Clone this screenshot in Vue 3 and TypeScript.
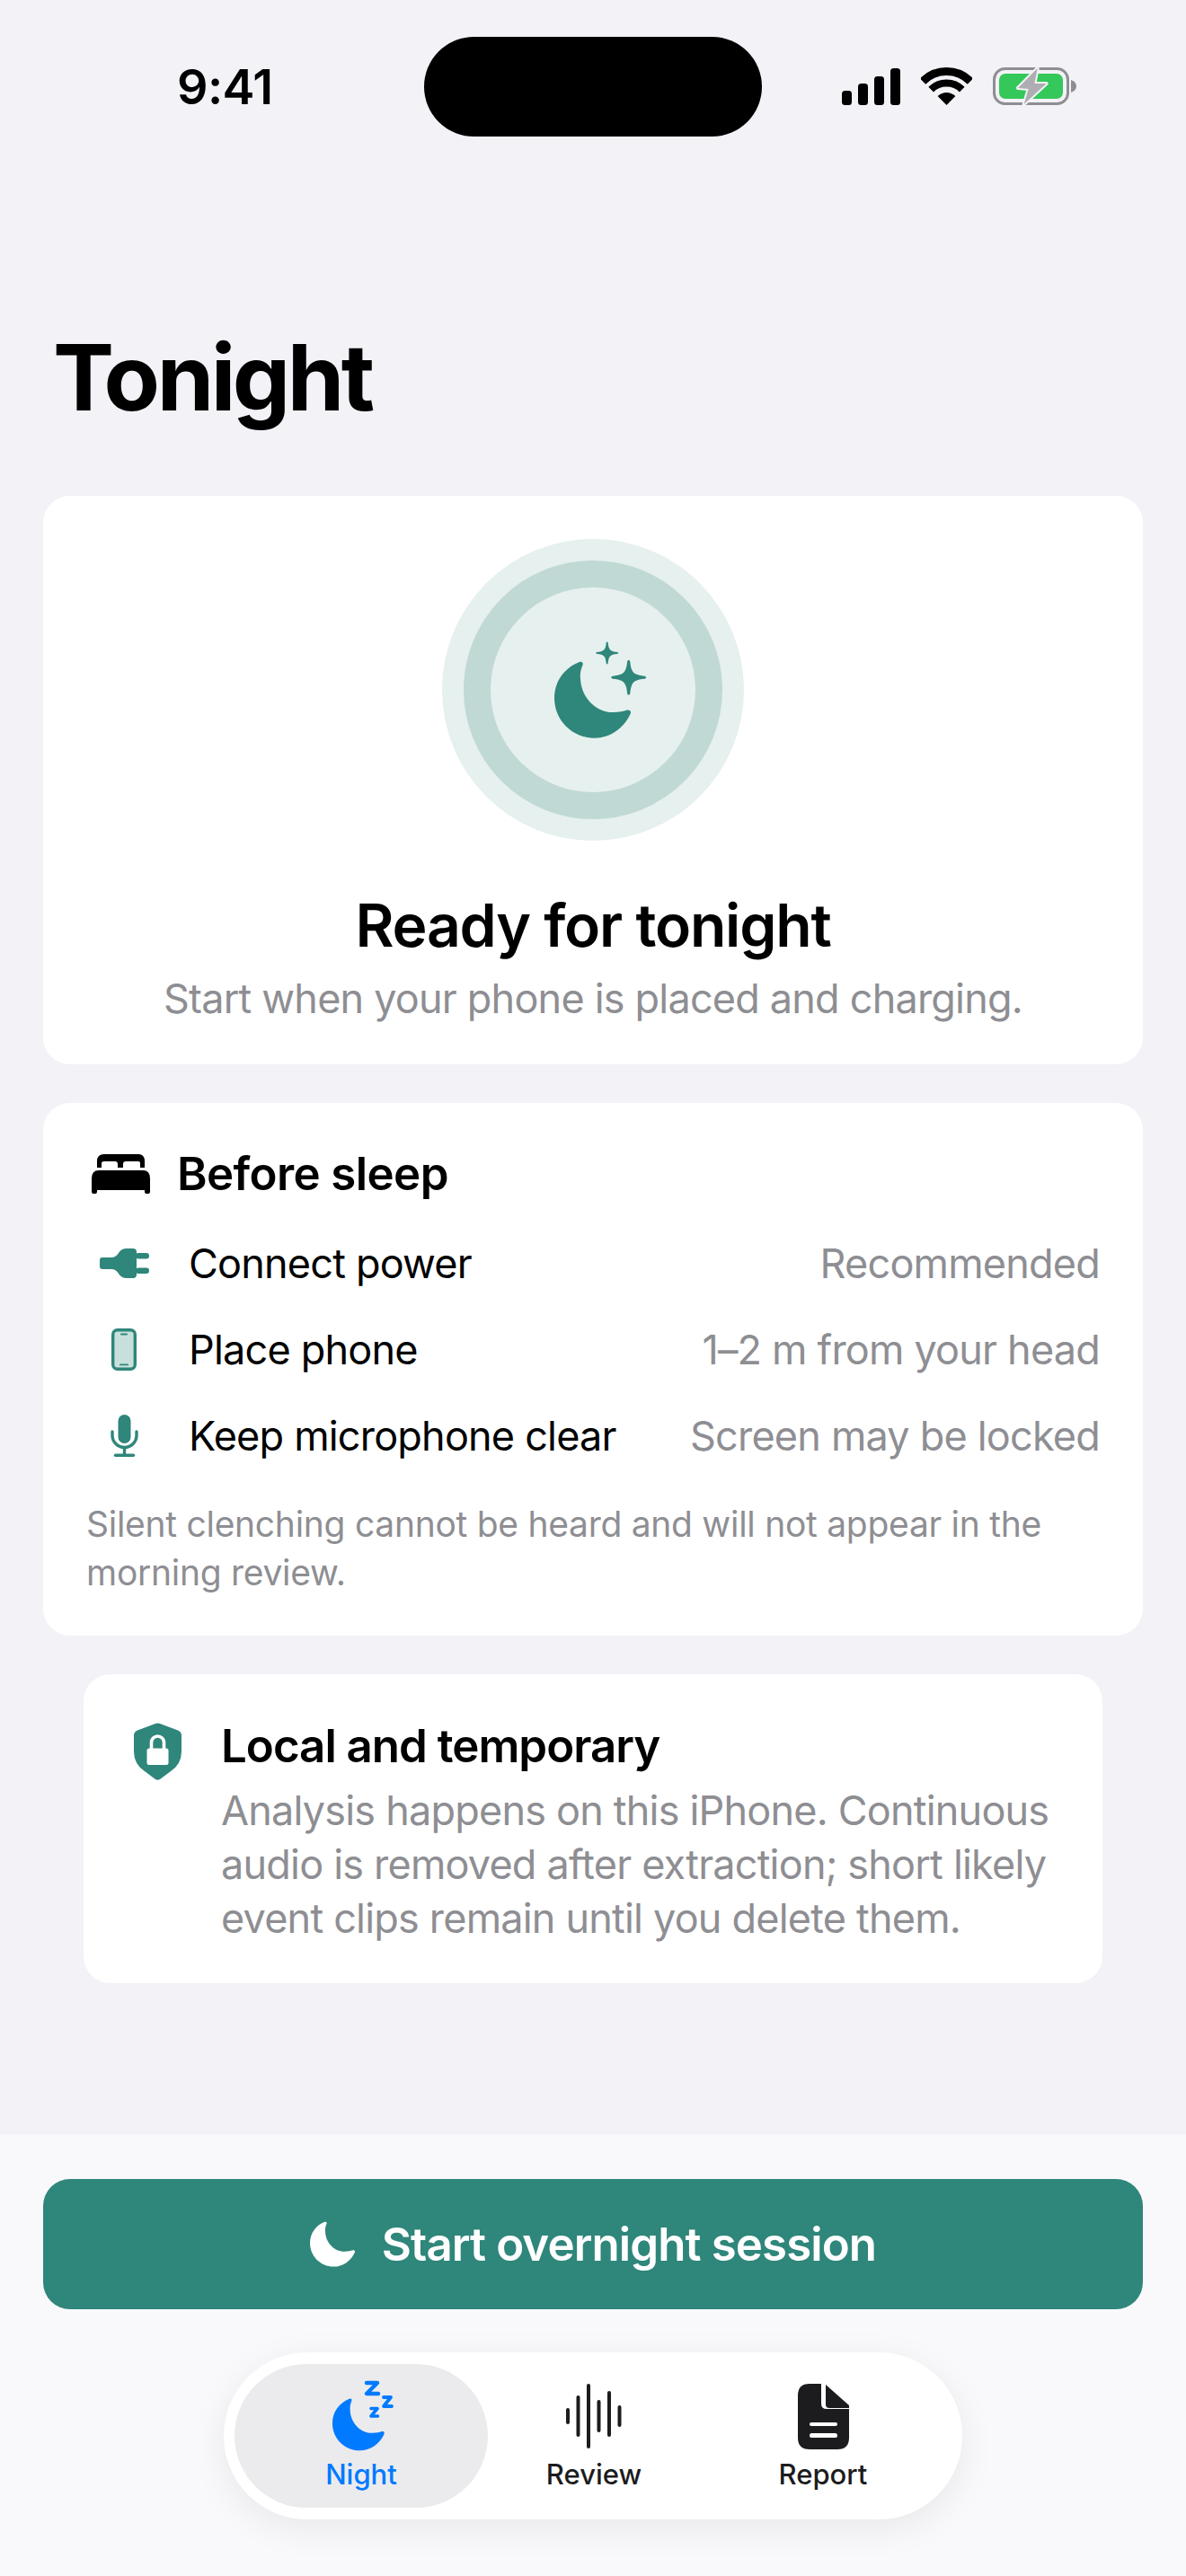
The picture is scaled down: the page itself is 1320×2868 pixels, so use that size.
<template>
  <div class="app">
    <div class="status">
      <div class="time">9:41</div>
      <div class="island"></div>
      <div class="status-icons">
        <svg class="signal" width="65" height="41" viewBox="0 0 65 41">
          <rect x="0" y="25" width="11" height="16" rx="3.5" />
          <rect x="18" y="17" width="11" height="24" rx="3.5" />
          <rect x="36" y="9" width="11" height="32" rx="3.5" />
          <rect x="54" y="0" width="11" height="41" rx="3.5" />
        </svg>
        <svg class="wifi" width="57" height="42" viewBox="0 0 57 42">
          <path d="M2 15.5A37.5 37.5 0 0 1 55 15.5" fill="none" stroke="#000" stroke-width="9" />
          <path d="M11.2 24.7A24.5 24.5 0 0 1 45.8 24.7" fill="none" stroke="#000" stroke-width="8" />
          <path d="M28.5 42L18.6 32Q28.5 24 38.4 32Z" />
        </svg>
        <svg class="battery" width="93" height="42" viewBox="0 0 93 42">
          <rect x="1.5" y="1.5" width="82" height="39" rx="12" fill="none" stroke="#8e8e93" stroke-width="3" />
          <rect x="7" y="7" width="71" height="28" rx="7" fill="#34c759" />
          <path d="M87 14Q93 16 93 21Q93 26 87 28Z" fill="#8e8e93" />
          <path d="M49.7 1L28 23L39.7 24L34.7 41L59.7 18L46.4 18Z" fill="#aeaeb2" stroke="#f2f2f7" stroke-width="4" stroke-linejoin="round" paint-order="stroke" />
        </svg>
      </div>
    </div>

    <main class="content">
      <h1 class="title">Tonight</h1>

      <section class="card hero">
        <div class="ring-outer">
          <div class="ring-inner">
            <svg width="120" height="120" viewBox="0 0 120 120" fill="#2f867a">
              <path :d="moonPath" />
              <path :d="starPath(99.7, 46.3, 19.5)" />
              <path :d="starPath(75.7, 19, 12.5)" />
            </svg>
          </div>
        </div>
        <h2 class="hero-title">Ready for tonight</h2>
        <p class="hero-sub">Start when your phone is placed and charging.</p>
      </section>

      <section class="card checklist">
        <div class="check-head">
          <svg class="bed" width="65" height="44" viewBox="0 0 65 44">
            <path d="M6 15V8Q6 0 14 0H52Q59 0 59 8V15H54V10Q54 8 52 8H38Q35 8 35 11V15H29V11Q29 8 26 8H14Q11 8 11 10V15Z" />
            <path d="M0 27Q0 18 8 18H57Q65 18 65 27V42Q65 44 63 44H61Q59 44 59 42V40H6V42Q6 44 4 44H2Q0 44 0 42Z" />
          </svg>
          <h3>Before sleep</h3>
        </div>
        <div v-for="row in rows" :key="row.label" class="check-row">
          <div class="row-icon">
            <svg v-if="row.icon === 'plug'" width="55" height="33" viewBox="0 0 55 33" fill="#2f867a">
              <path d="M3 10H13Q18 10 21 5Q24 0 30 0H37Q41 0 41 4V29Q41 33 37 33H30Q24 33 21 28Q18 23 13 23H3Q0 23 0 20V13Q0 10 3 10Z" />
              <rect x="40" y="5" width="15" height="6.5" rx="3.2" />
              <rect x="40" y="21.5" width="15" height="6.5" rx="3.2" />
            </svg>
            <svg v-else-if="row.icon === 'phone'" width="28" height="47" viewBox="0 0 28 47">
              <rect x="1.7" y="1.7" width="24.6" height="43.6" rx="5" fill="#c8e0dc" stroke="#2f867a" stroke-width="3.4" />
              <rect x="10" y="5.5" width="8" height="2" rx="1" fill="#2f867a" />
              <rect x="9" y="39.5" width="10" height="1.8" rx="0.9" fill="#2f867a" />
            </svg>
            <svg v-else width="31" height="47" viewBox="0 0 31 47" fill="none" stroke="#2f867a" stroke-width="3.4">
              <rect x="8.5" y="0" width="14" height="32" rx="7" fill="#2f867a" stroke="none" />
              <path d="M2 19V23A13.5 13.5 0 0 0 29 23V19" stroke-linecap="round" />
              <path d="M15.5 37V44" />
              <path d="M5.5 45.2H25.5" stroke-linecap="round" />
            </svg>
          </div>
          <span class="row-label">{{ row.label }}</span>
          <span class="row-note">{{ row.note }}</span>
        </div>
        <p class="footnote">Silent clenching cannot be heard and will not appear in the morning review.</p>
      </section>

      <section class="card privacy">
        <svg class="shield" width="53" height="64" viewBox="0 0 53 64">
          <path d="M24 1Q26.5 0 29 1L49 8.5Q53 10 53 14V32Q53 46 41 54L29 63Q26.5 64.5 24 63L12 54Q0 46 0 32V14Q0 10 4 8.5Z" fill="#2f867a" />
          <rect x="14.5" y="28.5" width="24" height="18.5" rx="2.5" fill="#fff" />
          <path d="M19.5 29V22A7 7 0 0 1 33.5 22V29" fill="none" stroke="#fff" stroke-width="3.6" />
        </svg>
        <div class="privacy-text">
          <h3>Local and temporary</h3>
          <p>Analysis happens on this iPhone. Continuous audio is removed after extraction; short likely event clips remain until you delete them.</p>
        </div>
      </section>
    </main>

    <footer class="bottom">
      <button class="start-btn">
        <svg width="50" height="51" viewBox="0 0 85 86" fill="#fff">
          <g transform="translate(-17 -28)"><path :d="moonPath" /></g>
        </svg>
        <span>Start overnight session</span>
      </button>

      <nav class="tabs">
        <div class="tab active">
          <div class="tab-icon night-icon">
            <svg width="70" height="80" viewBox="0 0 70 80">
              <g fill="#007aff" transform="translate(-10.6 1) scale(0.68)"><path :d="moonPath" /></g>
              <g fill="none" stroke="#007aff" stroke-linecap="round" stroke-linejoin="round">
                <path d="M39 3H51L39 15H52" stroke-width="4.4" />
                <path d="M58 19H66L58 29H67" stroke-width="3.8" />
                <path d="M44 31.5H51L44 40H51.5" stroke-width="3.6" />
              </g>
            </svg>
          </div>
          <span>Night</span>
        </div>
        <div class="tab">
          <div class="tab-icon">
            <svg width="62" height="72" viewBox="0 0 62 72" fill="#1c1c1e">
              <rect v-for="bar in waveBars" :key="bar.x" :x="bar.x" :y="bar.y" width="4" :height="bar.h" rx="2" />
            </svg>
          </div>
          <span>Review</span>
        </div>
        <div class="tab">
          <div class="tab-icon">
            <svg width="57" height="73" viewBox="0 0 57 73" fill="#1c1c1e">
              <path fill-rule="evenodd" d="M13 0H26V22Q26 28 32 28H57V60Q57 73 44 73H13Q0 73 0 60V13Q0 0 13 0ZM15 43Q13 43 13 45Q13 47 15 47H42Q44 47 44 45Q44 43 42 43ZM15 55Q13 55 13 57.5Q13 60 15 60H42Q44 60 44 57.5Q44 55 42 55Z" />
              <path d="M31 1L57 24V27H35Q31 27 31 23Z" />
            </svg>
          </div>
          <span>Report</span>
        </div>
      </nav>
    </footer>
  </div>
</template>

<script setup lang="ts">
const moonPath =
  'M45 29C47.500 28 49.500 30 48.500 32.500C46 38 45.500 43 46 48C47 70 65 86 83 85C89 85 94 84 98 82.500C101 82 103 84 101.500 87C94 103 79 113.700 61.700 113.700C37 113.700 17 94 17 69C17 50 29 35 45 29Z'

function starPath(cx: number, cy: number, r: number) {
  const k = r * 0.14
  const t = r * 0.08
  return [
    `M${cx - t} ${cy - r + t}`,
    `Q${cx} ${cy - r - t} ${cx + t} ${cy - r + t}`,
    `C${cx + k} ${cy - k * 2} ${cx + k * 2} ${cy - k} ${cx + r - t} ${cy - t}`,
    `Q${cx + r + t} ${cy} ${cx + r - t} ${cy + t}`,
    `C${cx + k * 2} ${cy + k} ${cx + k} ${cy + k * 2} ${cx + t} ${cy + r - t}`,
    `Q${cx} ${cy + r + t} ${cx - t} ${cy + r - t}`,
    `C${cx - k} ${cy + k * 2} ${cx - k * 2} ${cy + k} ${cx - r + t} ${cy + t}`,
    `Q${cx - r - t} ${cy} ${cx - r + t} ${cy - t}`,
    `C${cx - k * 2} ${cy - k} ${cx - k} ${cy - k * 2} ${cx - t} ${cy - r + t}`,
    'Z',
  ].join('')
}

const rows = [
  { icon: 'plug', label: 'Connect power', note: 'Recommended' },
  { icon: 'phone', label: 'Place phone', note: '1–2 m from your head' },
  { icon: 'mic', label: 'Keep microphone clear', note: 'Screen may be locked' },
]

const waveBars = [
  { x: 0, y: 27, h: 18 },
  { x: 11.500, y: 13, h: 46 },
  { x: 23, y: 0, h: 72 },
  { x: 34.500, y: 18, h: 36 },
  { x: 46, y: 8, h: 51 },
  { x: 57.500, y: 24, h: 24 },
]
</script>

<style>
html,
body {
  margin: 0;
  background: #f2f2f7;
}
</style>

<style scoped>
.app {
  width: 1320px;
  height: 2868px;
  display: flex;
  flex-direction: column;
  background: #f2f2f7;
  color: #000;
  font-family: Inter, "Liberation Sans", sans-serif;
  overflow: hidden;
}

.status {
  height: 192px;
  flex: none;
  display: grid;
  grid-template-columns: 472px 376px 472px;
  align-items: center;
}

.time {
  padding-left: 197px;
  font-size: 54px;
  font-weight: 600;
  letter-spacing: -0.6px;
}

.island {
  height: 111px;
  background: #000;
  border-radius: 56px;
}

.status-icons {
  padding-left: 89px;
  display: flex;
  align-items: center;
}

.signal { margin-right: 23px; margin-top: 1px; }
.wifi { margin-right: 23px; }

.content {
  flex: 1;
  padding: 0 48px;
}

.title {
  margin: 0;
  height: 360px;
  box-sizing: border-box;
  padding: 172px 0 0 11px;
  font-size: 102px;
  line-height: 112px;
  font-weight: 700;
  letter-spacing: -3.5px;
}

.card {
  background: #fff;
  border-radius: 30px;
}

.hero {
  height: 633px;
  box-sizing: border-box;
  padding-top: 48px;
  display: flex;
  flex-direction: column;
  align-items: center;
}

.ring-outer {
  width: 336px;
  height: 336px;
  border-radius: 50%;
  background: #e6f0ee;
  display: flex;
  align-items: center;
  justify-content: center;
}

.ring-inner {
  width: 228px;
  height: 228px;
  border-radius: 50%;
  background: #e6f0ee;
  border: 30px solid #c0d9d5;
  display: flex;
  align-items: center;
  justify-content: center;
}

.hero-title {
  margin: 54px 0 0;
  font-size: 66px;
  line-height: 80px;
  font-weight: 600;
  letter-spacing: -1.2px;
}

.hero-sub {
  margin: 14px 0 0;
  font-size: 45px;
  line-height: 56px;
  letter-spacing: -0.8px;
  color: #8e8e93;
}

.checklist {
  margin-top: 43px;
  height: 593px;
  box-sizing: border-box;
  padding: 52px 48px 0;
}

.check-head {
  display: flex;
  align-items: center;
  gap: 30px;
  height: 54px;
  padding-left: 6px;
  margin-bottom: 24px;
}

.check-head h3 {
  margin: 0;
  font-size: 51px;
  line-height: 64px;
  font-weight: 600;
  letter-spacing: -0.6px;
}

.check-row {
  height: 96px;
  display: flex;
  align-items: center;
  font-size: 45px;
  letter-spacing: -0.8px;
  white-space: nowrap;
}

.row-icon {
  width: 84px;
  margin-right: 30px;
  flex: none;
  display: flex;
  justify-content: center;
}

.row-label {
  flex: 1;
}

.row-note {
  color: #8e8e93;
}

.footnote {
  margin: 24px 0 0;
  font-size: 39px;
  line-height: 54px;
  letter-spacing: -0.28px;
  color: #8e8e93;
}

.privacy {
  margin: 43px 45px 0;
  height: 344px;
  box-sizing: border-box;
  padding: 50px 45px 0 56px;
  display: flex;
  gap: 44px;
}

.shield { flex: none; margin-top: 4px; }

.privacy-text h3 {
  margin: 0;
  font-size: 51px;
  line-height: 60px;
  font-weight: 600;
  letter-spacing: -1px;
}

.privacy-text p {
  margin: 12px 0 0;
  font-size: 45px;
  line-height: 60px;
  letter-spacing: -0.8px;
  color: #8e8e93;
}

.bottom {
  flex: none;
  height: 492px;
  box-sizing: border-box;
  padding: 50px 48px 0;
  background: #f9f9fc;
  display: flex;
  flex-direction: column;
  align-items: center;
}

.start-btn {
  width: 100%;
  height: 145px;
  flex: none;
  border: 0;
  border-radius: 30px;
  background: #2f867a;
  color: #fff;
  font-family: inherit;
  font-size: 51px;
  font-weight: 600;
  letter-spacing: -0.9px;
  display: flex;
  align-items: center;
  justify-content: center;
  gap: 30px;
}

.tabs {
  margin-top: 48px;
  width: 822px;
  height: 186px;
  box-sizing: border-box;
  padding: 13px 18px 13px 12px;
  background: #fff;
  border-radius: 93px;
  box-shadow: 0 10px 40px rgba(0, 0, 0, 0.07);
  display: grid;
  grid-template-columns: 282px 236px 274px;
}

.tab {
  border-radius: 80px;
  display: flex;
  flex-direction: column;
  align-items: center;
  padding-top: 18px;
  font-size: 31px;
  line-height: 38px;
  font-weight: 500;
  color: #1c1c1e;
}

.tab-icon {
  height: 80px;
  margin-bottom: 6px;
  display: flex;
  align-items: center;
}

.night-icon { padding-left: 3px; }

.tab.active {
  background: #ebebed;
  color: #007aff;
}
</style>
